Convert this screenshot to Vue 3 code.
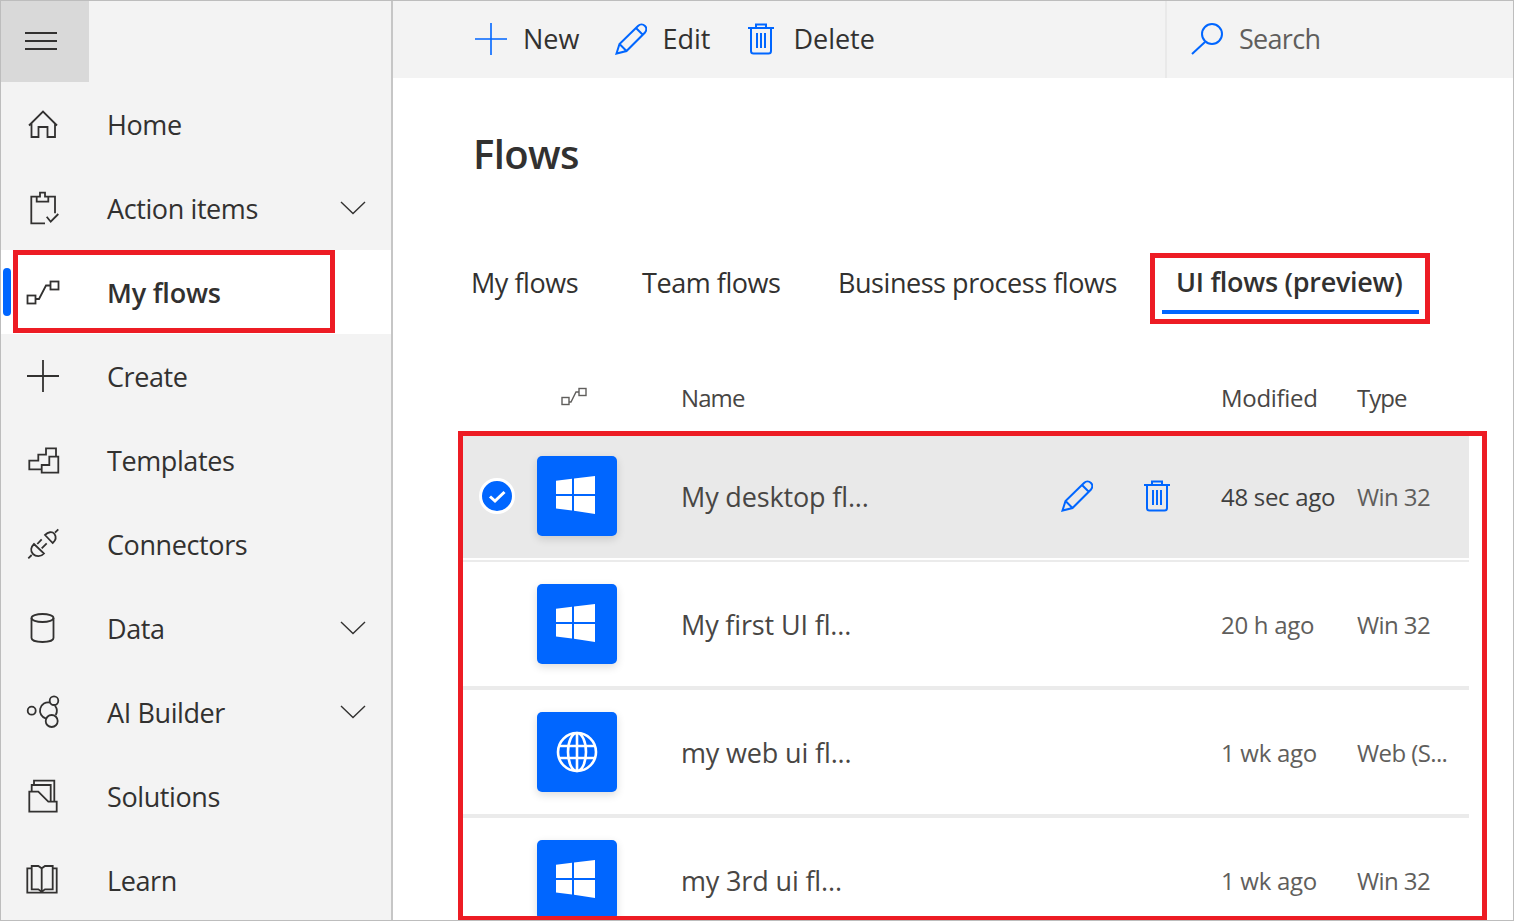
<template>
  <div class="page">
    <aside class="nav">
      <button class="burger">
        <svg width="32" height="18" viewBox="0 0 32 18"><path d="M0 1H32M0 9H32M0 17H32" /></svg>
      </button>
      <a v-for="item in navItems" :key="item.label" class="nav-item" :class="{ active: item.active }">
        <span v-if="item.active" class="marker"></span>
        <svg class="nav-icon" width="36" height="36" viewBox="0 0 36 36" v-html="item.icon"></svg>
        <span class="nav-label">{{ item.label }}</span>
        <svg v-if="item.chevron" class="chevron" width="26" height="14" viewBox="0 0 26 14"><path d="M1 1L13 12.5L25 1" /></svg>
      </a>
    </aside>

    <main class="main">
      <div class="toolbar">
        <button class="tool new">
          <svg width="32" height="32" viewBox="0 0 32 32"><path d="M16 0V32M0 16H32" /></svg>
          New
        </button>
        <button class="tool edit">
          <svg width="32" height="32" viewBox="0 0 32 32"><path :d="pencil" /></svg>
          Edit
        </button>
        <button class="tool del">
          <svg width="26" height="32" viewBox="0 0 26 32"><path :d="trash" /></svg>
          Delete
        </button>
        <div class="search">
          <svg width="32" height="32" viewBox="0 0 32 32"><circle cx="21" cy="11" r="10" /><path d="M14 19L1 31" /></svg>
          <span>Search</span>
        </div>
      </div>

      <div class="content">
        <h1 class="title">Flows</h1>
        <div class="tabs">
          <span v-for="tab in tabs" :key="tab.label" class="tab" :class="{ current: tab.current }">{{ tab.label }}</span>
        </div>

        <div class="grid head">
          <svg class="head-icon" width="26" height="20" viewBox="0 0 26 20">
            <rect x="1" y="10.5" width="7" height="7" /><rect x="18" y="1.5" width="7" height="7" />
            <path d="M8 15H10L15 5H18" />
          </svg>
          <span class="head-name">Name</span>
          <span class="head-mod">Modified</span>
          <span class="head-type">Type</span>
        </div>

        <div v-for="(row, i) in rows" :key="row.name" class="grid row" :class="{ selected: i === 0 }">
          <span class="check-cell">
            <svg v-if="i === 0" width="36" height="36" viewBox="0 0 36 36">
              <circle class="check-bg" cx="18" cy="18" r="16.5" />
              <path class="check-mark" d="M11 18.5L16 23L25.5 14" />
            </svg>
          </span>
          <span class="tile">
            <svg v-if="row.web" width="42" height="42" viewBox="0 0 42 42" class="globe">
              <circle cx="21" cy="21" r="19" />
              <ellipse cx="21" cy="21" rx="9" ry="19" />
              <path d="M21 2V40M4 15H38M4 27H38" />
            </svg>
            <svg v-else width="39" height="38" viewBox="0 0 39 38" class="win">
              <path d="M0 4.7L16 2.7V18H0ZM18 2.4L39 0V18H18ZM0 20H16V34.5L0 32.5ZM18 20H39V38L18 34.8Z" />
            </svg>
          </span>
          <span class="name">{{ row.name }}</span>
          <span class="action">
            <svg v-if="i === 0" width="32" height="32" viewBox="0 0 32 32"><path :d="pencil" /></svg>
          </span>
          <span class="action">
            <svg v-if="i === 0" width="26" height="32" viewBox="0 0 26 32"><path :d="trash" /></svg>
          </span>
          <span class="meta" :class="{ near: row.near }">{{ row.modified }}</span>
          <span class="meta type">{{ row.type }}</span>
        </div>
      </div>
    </main>

    <div class="mark mark-nav"></div>
    <div class="mark mark-tab"></div>
    <div class="mark mark-rows"></div>
  </div>
</template>

<script setup>
const pencil =
  "M1.5 30.5L4.5 21L23 3C25 1 28 1 30 3C32 5 31.5 7.5 30 9.5L11.5 28ZM4.5 21L11.5 28M21 5L28 12";
const trash =
  "M0 5H26M8 5V1.5H18V5M3 5V28Q3 30.5 5.5 30.5H20.5Q23 30.5 23 28V5M9 10V25M13 10V25M17 10V25";

const navItems = [
  {
    label: "Home",
    icon: '<path d="M4 19.5L18 5.5L32 19.5M6.5 17.5V31H13.5V21H22.5V31H30V17.5" />',
  },
  {
    label: "Action items",
    chevron: true,
    icon: '<path d="M11.7 6.7H6.3V33.3H20M23.3 6.7H30V23.3M11.7 11.7V6.7H15V2.7H20V6.7H23.3V11.7ZM21.7 26.7L25.7 31.7L33.3 24" />',
  },
  {
    label: "My flows",
    active: true,
    icon: '<rect x="2.5" y="21.5" width="8" height="8" /><rect x="25.5" y="7.5" width="8" height="8" /><path d="M10.5 25H14L21 11.5H25.5" />',
  },
  { label: "Create", icon: '<path d="M18 2V34M2 18H34" />' },
  {
    label: "Templates",
    icon: '<path d="M16.7 27.3H4.3V18.7H13.3V12.7H21V6.3H31V14.7M16.7 23H24.3V14.7H33.3V30.7H16.7Z" />',
  },
  {
    label: "Connectors",
    icon: '<path d="M33.3 3.3L30 6.7M20 9L27.7 17C30.5 14.5 31.5 11 29.5 8C27 5 23 6 20 9ZM9 18L19 27.5C16 31 11 31 8 28C5 25 6 21 9 18ZM6.7 29L3.3 32.3M12.3 18L16.7 13.3M16.7 22.3L21.7 17.3" />',
  },
  {
    label: "Data",
    chevron: true,
    icon: '<ellipse cx="17.5" cy="8" rx="11" ry="4" /><path d="M6.5 8V28C6.5 30.5 11.5 32 17.5 32S28.5 30.5 28.5 28V8" />',
  },
  {
    label: "AI Builder",
    chevron: true,
    icon: '<circle cx="6.7" cy="16.7" r="4" /><circle cx="29" cy="6.7" r="4.3" /><circle cx="26.7" cy="27" r="6" /><path d="M25 8.5A8.3 8.3 0 0 0 21 24.6M30 11.7A8.3 8.3 0 0 1 30.7 21" />',
  },
  {
    label: "Solutions",
    icon: '<path d="M4.3 13.7H13.3L23.3 23.7H31.7V33.7H4.3ZM6.7 13.7V7H25.7V23.7M9 7V2.7H29.3V23.7" />',
  },
  {
    label: "Learn",
    icon: '<path d="M6.7 6.3H2.3V30.7H31.7V6.3H27.7M6.7 4H13.3L16.7 6.3L20 4H27.7V27.3H20L16.7 29.7L13.3 27.3H6.7ZM16.7 6.3V29.7" />',
  },
];

const tabs = [
  { label: "My flows" },
  { label: "Team flows" },
  { label: "Business process flows" },
  { label: "UI flows (preview)", current: true },
];

const rows = [
  { name: "My desktop fl...", modified: "48 sec ago", type: "Win 32", near: true },
  { name: "My first UI fl...", modified: "20 h ago", type: "Win 32" },
  { name: "my web ui fl...", modified: "1 wk ago", type: "Web (S...", web: true },
  { name: "my 3rd ui fl...", modified: "1 wk ago", type: "Win 32" },
];
</script>

<style scoped>
.page {
  position: relative;
  display: flex;
  box-sizing: border-box;
  width: 1514px;
  height: 921px;
  overflow: hidden;
  border: 1px solid #bdbdbd;
  background: #fff;
  color: #323130;
  font-family: "Open Sans", "Liberation Sans", sans-serif;
}
svg {
  display: block;
  flex: none;
  fill: none;
}
button {
  border: none;
  background: none;
  padding: 0;
  font: inherit;
  color: inherit;
}

.nav {
  box-sizing: border-box;
  flex: none;
  width: 392px;
  background: #f3f3f3;
  border-right: 2px solid #c6c6c6;
}
.burger {
  display: flex;
  align-items: center;
  width: 88px;
  height: 81px;
  padding: 0 0 1px 24px;
  background: #d9d9d9;
}
.burger path {
  stroke: #323130;
  stroke-width: 2;
}
.nav-item {
  position: relative;
  display: flex;
  align-items: center;
  height: 84px;
  padding-left: 24px;
  font-size: 27px;
  letter-spacing: -0.4px;
}
.nav-item.active {
  background: #fff;
  font-weight: 600;
  letter-spacing: -0.2px;
}
.marker {
  position: absolute;
  left: 2px;
  top: 18px;
  width: 8px;
  height: 48px;
  border-radius: 4px;
  background: #0066ff;
}
.nav-icon {
  stroke: #323130;
  stroke-width: 1.8;
}
.nav-label {
  margin-left: 46px;
}
.chevron {
  margin-left: auto;
  margin-right: 25px;
  stroke: #323130;
  stroke-width: 1.4;
}

.main {
  flex: 1;
  min-width: 0;
}
.toolbar {
  display: flex;
  align-items: center;
  height: 77px;
  padding-left: 82px;
  background: #f3f3f3;
  font-size: 27px;
  letter-spacing: -0.7px;
}
.tool {
  display: flex;
  align-items: center;
  gap: 16px;
  margin-bottom: 2px;
}
.tool svg,
.action svg {
  stroke: #0066ff;
  stroke-width: 2;
}
.tool.new svg {
  stroke-width: 1.6;
}
.tool.edit {
  margin-left: 36px;
  gap: 15px;
}
.tool.del {
  margin-left: 38px;
  gap: 19px;
}
.search {
  display: flex;
  align-items: center;
  gap: 16px;
  box-sizing: border-box;
  width: 348px;
  height: 100%;
  margin-left: auto;
  padding: 0 0 2px 24px;
  border-left: 2px solid #e9e9e9;
  color: #605e5c;
}
.search svg {
  stroke: #0066ff;
  stroke-width: 2;
}

.content {
  padding: 49px 44px 0 65px;
}
.title {
  margin: 0 0 0 15px;
  font-size: 40px;
  font-weight: 600;
  line-height: 54px;
  letter-spacing: -0.6px;
}
.tabs {
  display: grid;
  grid-template-columns: 171px 196px 324px 257px;
  height: 72px;
  margin-top: 67px;
  padding-left: 13px;
  font-size: 27px;
  letter-spacing: -0.45px;
  line-height: 70px;
}
.tab.current {
  position: relative;
  padding-left: 14px;
  font-weight: 600;
  letter-spacing: -0.3px;
  line-height: 68px;
  white-space: nowrap;
}
.tab.current::after {
  content: "";
  position: absolute;
  left: 0;
  right: 0;
  top: 62px;
  height: 4px;
  background: #0066ff;
}

.grid {
  display: grid;
  grid-template-columns: 79px 144px 380px 83px 77px 136px 1fr;
  align-items: center;
}
.head {
  height: 66px;
  margin-top: 44px;
  padding-bottom: 2px;
  font-size: 24px;
  letter-spacing: -0.3px;
  color: #484644;
}
.head-icon {
  grid-column: 2;
  margin-left: 24px;
  stroke: #605e5c;
  stroke-width: 1.4;
}
.head-name {
  grid-column: 3 / 6;
  letter-spacing: -0.9px;
}
.head-type {
  letter-spacing: -1px;
}
.row {
  position: relative;
  height: 128px;
}
.row::after {
  content: "";
  position: absolute;
  left: 0;
  right: 0;
  bottom: -2px;
  height: 4px;
  background: #ebebeb;
}
.row.selected {
  background: linear-gradient(#e9e9e9 126px, #fff 126px);
}
.row.selected::after {
  bottom: -2px;
  height: 2px;
}
.check-cell {
  padding-left: 21px;
}
.check-bg {
  fill: #0066ff;
  stroke: #fff;
  stroke-width: 3;
}
.check-mark {
  stroke: #fff;
  stroke-width: 3;
}
.tile {
  display: flex;
  align-items: center;
  justify-content: center;
  width: 80px;
  height: 80px;
  border-radius: 5px;
  background: #0066ff;
  box-shadow: 0 3px 8px rgba(0, 0, 0, 0.14);
}
.win {
  fill: #fff;
  margin: 0 3px 2px 0;
}
.globe {
  stroke: #fff;
  stroke-width: 2.6;
}
.name {
  font-size: 27px;
  letter-spacing: -0.15px;
  color: #484644;
}
.meta {
  font-size: 24px;
  letter-spacing: -0.3px;
  color: #605e5c;
  white-space: nowrap;
}
.meta.type {
  letter-spacing: -0.6px;
}
.meta.near {
  color: #3f3f3f;
}

.mark {
  position: absolute;
  box-sizing: border-box;
  border: 5px solid #ed1c24;
}
.mark-nav {
  left: 12px;
  top: 249px;
  width: 322px;
  height: 83px;
}
.mark-tab {
  left: 1149px;
  top: 252px;
  width: 280px;
  height: 71px;
}
.mark-rows {
  left: 457px;
  top: 430px;
  width: 1029px;
  height: 490px;
}
</style>

<style>
html,
body {
  margin: 0;
}
</style>
